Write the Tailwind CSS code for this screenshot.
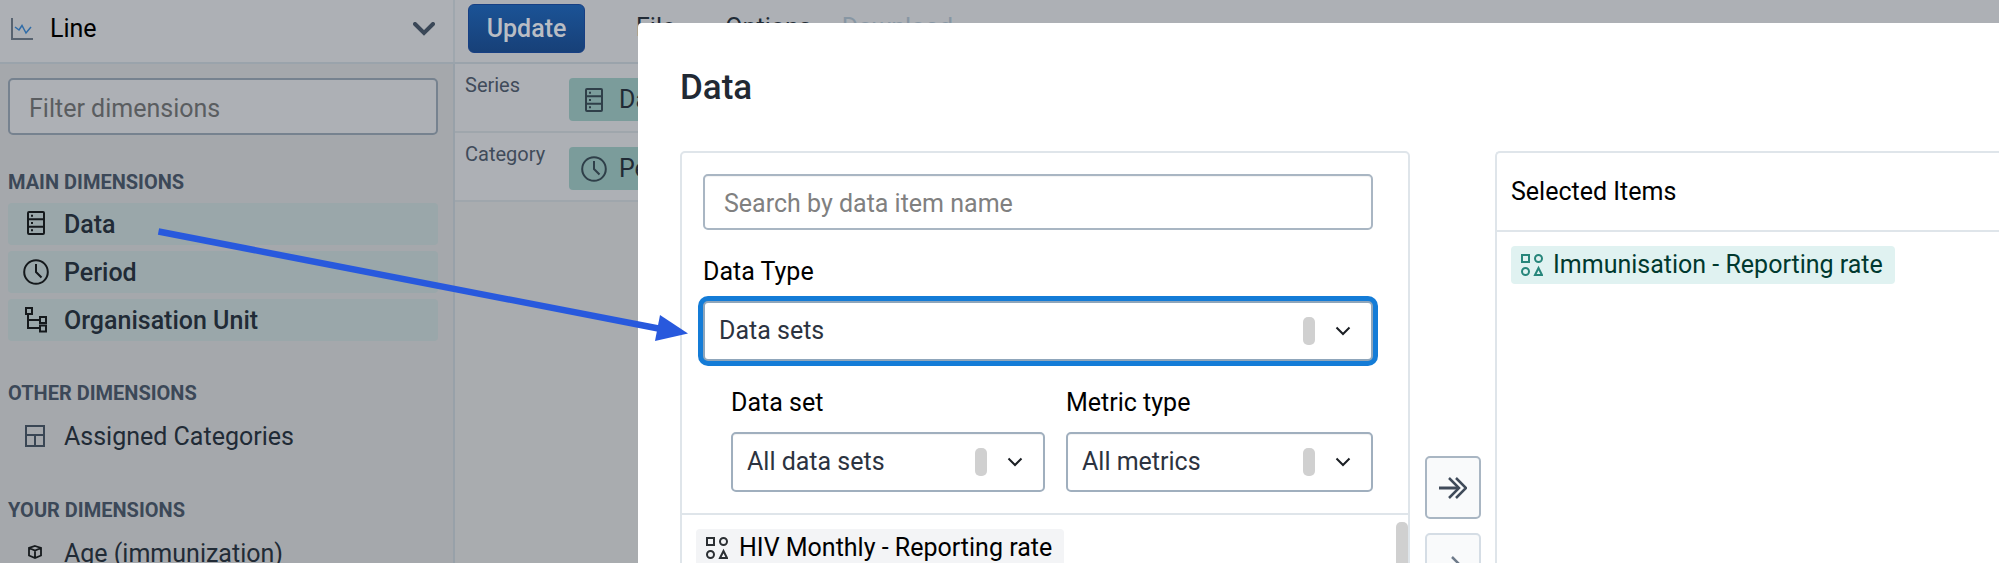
<!DOCTYPE html>
<html lang="en">
<head>
<meta charset="utf-8">
<title>Data visualizer</title>
<script src="https://cdn.jsdelivr.net/npm/@tailwindcss/browser@4"></script>
</head>
<body class="relative flex h-screen flex-col overflow-hidden bg-[#a9acaf] font-['Roboto',sans-serif] text-[25px] leading-7 text-[#212b36]">
<svg class="hidden">
  <symbol id="server" viewBox="0 0 18 24"><g fill="none" stroke="currentColor" stroke-width="2"><rect x="1" y="1" width="16" height="22" rx="1"/><path d="M1 8.300h16M1 15.700h16"/></g><path fill="currentColor" d="M4 3.800h2v2H4zM4 11h2v2H4zM4 18.300h2v2H4z"/></symbol>
  <symbol id="clock" viewBox="0 0 26 26"><g fill="none" stroke="currentColor" stroke-width="2"><circle cx="13" cy="13" r="11.800"/><path d="M13 5v8l5.500 5.500"/></g></symbol>
  <symbol id="shapes" viewBox="0 0 22 22"><g fill="none" stroke="currentColor" stroke-width="2"><path d="M1 1h7v7H1zM14 21l3.500-7 3.500 7z"/><circle cx="17.500" cy="4.500" r="3.500"/><circle cx="4.500" cy="17.500" r="3.500"/></g></symbol>
  <symbol id="chev" viewBox="0 0 16 10"><path d="M1.500 1.500 8 8l6.500-6.500" fill="none" stroke="currentColor" stroke-width="2"/></symbol>
</svg>

<header class="flex h-16 shrink-0 border-b-2 border-[#9aa3ab] bg-[#adb0b5]">
  <button class="flex w-[455px] shrink-0 items-center border-r-2 border-[#9fa7ae] pr-[18px] pb-1 pl-[11px] text-left text-black">
    <svg class="h-[22px] w-[22px]" viewBox="0 0 22 22" fill="none"><path d="M1 0v21h21" stroke="#586370" stroke-width="2"/><path d="m4 9 4 3 3-4.500 4 7.500 5-6" stroke="#2f6ca8" stroke-width="1.500"/></svg>
    <span class="ml-[17px] flex-1">Line</span>
    <svg class="h-[14px] w-[22px] text-[#3a4757]" viewBox="0 0 22 14"><path d="m2 2 9 9 9-9" fill="none" stroke="currentColor" stroke-width="4" stroke-linecap="round"/></svg>
  </button>
  <nav class="flex flex-1 items-start pt-1 pl-[13px]">
    <button class="h-[49px] w-[117px] rounded-md border border-[#173f83] bg-linear-to-b from-[#1b5396] to-[#174078] font-medium text-[#b9bdc4]">Update</button>
    <button class="mt-[10px] ml-[51px]">File</button>
    <button class="mt-[10px] ml-[50px]">Options</button>
    <button class="mt-[10px] ml-[30px] text-[#8796a3]" disabled>Download</button>
  </nav>
</header>

<div class="flex min-h-0 flex-1">
  <aside class="w-[455px] shrink-0 border-r-2 border-[#98a1a9] bg-[#a5a8ac] pt-[14px] pr-[15px] pl-2">
    <input aria-label="Filter dimensions" placeholder="Filter dimensions" class="block h-[57px] w-full rounded-[5px] border-2 border-[#76828f] bg-[#adb0b5] px-[19px] pt-[3px] placeholder:text-[#5a5d60]">
    <h2 class="mt-[35px] text-[20px] leading-6 font-bold text-[#3c4858]">MAIN DIMENSIONS</h2>
    <ul class="mt-[9px] flex flex-col gap-[6px] font-medium">
      <li class="flex h-[42px] items-center rounded bg-[#9aa7aa] pt-[2px]"><span class="flex w-14 pb-1 pl-[19px]"><svg class="h-6 w-[18px] text-[#15191c]"><use href="#server"/></svg></span>Data</li>
      <li class="flex h-[42px] items-center rounded bg-[#9aa7aa] pt-[2px]"><span class="flex w-14 pb-[2px] pl-[15px]"><svg class="h-[26px] w-[26px] text-[#15191c]"><use href="#clock"/></svg></span>Period</li>
      <li class="flex h-[42px] items-center rounded bg-[#9aa7aa] pt-[2px]"><span class="flex w-14 pb-[2px] pl-[17px]"><svg class="h-[26px] w-[22px]" viewBox="0 0 22 26" fill="none" stroke="#15191c" stroke-width="2"><path d="M1 1h6v6H1zM15 10h6v6h-6zM15 18.500h6v6h-6zM3 7v14h12M3 13h12"/></svg></span>Organisation Unit</li>
    </ul>
    <h2 class="mt-10 text-[20px] leading-6 font-bold text-[#3c4858]">OTHER DIMENSIONS</h2>
    <ul class="mt-[10px]">
      <li class="flex h-[42px] items-center pt-[2px]"><span class="flex w-14 pb-[2px] pl-[17px]"><svg class="h-[22px] w-5" viewBox="0 0 20 22" fill="none" stroke="#3a4654" stroke-width="2"><path d="M1 1h18v20H1zM1 10h18M10 10v11"/></svg></span>Assigned Categories</li>
    </ul>
    <h2 class="mt-[41px] text-[20px] leading-6 font-bold text-[#3c4858]">YOUR DIMENSIONS</h2>
    <ul class="mt-[10px]">
      <li class="flex h-[42px] items-center pt-[2px]"><span class="flex w-14 pb-1 pl-5"><svg class="h-[14px] w-[14px]" viewBox="0 0 14 14" fill="none" stroke="#15191c" stroke-width="1.800"><path d="m7 1 6 2v7.500L7 13l-6-2.500V3zM1 3l6 2.500L13 3M7 5.500V13"/></svg></span>Age (immunization)</li>
    </ul>
  </aside>
  <main class="flex-1">
    <section class="flex h-[69px] border-b-2 border-[#9fa6ac] bg-[#adb0b5] pl-[10px]">
      <h3 class="w-[104px] pt-[7px] text-[20px] text-[#404b5a]">Series</h3>
      <span class="mt-[14px] flex h-[43px] w-[130px] items-center gap-4 rounded bg-[#7b9c9b] pl-4"><svg class="h-6 w-[18px] text-[#2f3f49]"><use href="#server"/></svg>Data</span>
    </section>
    <section class="flex h-[69px] border-b-2 border-[#9fa6ac] bg-[#adb0b5] pl-[10px]">
      <h3 class="w-[104px] pt-[7px] text-[20px] text-[#404b5a]">Category</h3>
      <span class="mt-[14px] flex h-[43px] w-[130px] items-center gap-3 rounded bg-[#7b9c9b] pl-3"><svg class="h-[26px] w-[26px] text-[#2f3f49]"><use href="#clock"/></svg>Period</span>
    </section>
  </main>
</div>

<div role="dialog" aria-labelledby="title" class="absolute top-[23px] right-0 bottom-0 left-[638px] overflow-hidden rounded-tl bg-white pt-[45px] pl-[42px] text-black">
  <h1 id="title" class="text-[35px] leading-10 font-medium text-[#212934]">Data</h1>
  <div class="mt-[43px] flex h-[600px]">
    <section class="w-[730px] shrink-0 rounded-[5px] border-2 border-[#dfe5ea]">
      <div class="border-b-2 border-[#dfe5ea] px-[21px] py-[21px]">
        <div class="pr-[14px]">
          <input aria-label="Search" placeholder="Search by data item name" class="block h-14 w-full rounded-[5px] border-2 border-[#a9b6c3] px-[19px] pt-[2px] inset-shadow-xs placeholder:text-[#808080]">
          <label for="type" class="mt-7 block">Data Type</label>
          <div class="relative mt-[15px]">
            <select id="type" class="block h-[60px] w-full appearance-none rounded-[5px] border-2 border-[#8fa6bb] bg-white px-[14px] text-[#2c3340] ring-[5px] ring-[#147cd7]"><option>Data sets</option></select>
            <span class="pointer-events-none absolute inset-y-0 right-[22px] flex items-center gap-5"><i class="h-7 w-3 rounded-[5px] bg-[#d0d0d0]"></i><svg class="h-[10px] w-4 text-[#1b1f24]"><use href="#chev"/></svg></span>
          </div>
        </div>
        <div class="mt-7 flex gap-[21px] pr-[14px] pl-7">
          <div class="w-[314px]">
            <label for="set" class="block">Data set</label>
            <div class="relative mt-[15px]">
              <select id="set" class="block h-[60px] w-full appearance-none rounded-[5px] border-2 border-[#a0afbe] bg-white px-[14px] text-[#2c3340] inset-shadow-xs"><option>All data sets</option></select>
              <span class="pointer-events-none absolute inset-y-0 right-[22px] flex items-center gap-5"><i class="h-7 w-3 rounded-[5px] bg-[#d0d0d0]"></i><svg class="h-[10px] w-4 text-[#1b1f24]"><use href="#chev"/></svg></span>
            </div>
          </div>
          <div class="flex-1">
            <label for="metric" class="block">Metric type</label>
            <div class="relative mt-[15px]">
              <select id="metric" class="block h-[60px] w-full appearance-none rounded-[5px] border-2 border-[#a0afbe] bg-white px-[14px] text-[#2c3340] inset-shadow-xs"><option>All metrics</option></select>
              <span class="pointer-events-none absolute inset-y-0 right-[22px] flex items-center gap-5"><i class="h-7 w-3 rounded-[5px] bg-[#d0d0d0]"></i><svg class="h-[10px] w-4 text-[#1b1f24]"><use href="#chev"/></svg></span>
            </div>
          </div>
        </div>
      </div>
      <div class="flex justify-between pl-[14px]">
        <div class="mt-[14px] flex h-[38px] items-center gap-[11px] rounded bg-[#f3f4f6] pr-3 pl-[10px]"><svg class="h-[22px] w-[22px] text-[#2b2f33]"><use href="#shapes"/></svg>HIV Monthly - Reporting rate</div>
        <i class="mt-[7px] h-20 w-3 rounded-t-[5px] bg-[#d0d0d0]"></i>
      </div>
    </section>
    <div class="flex w-[85px] shrink-0 flex-col items-center gap-[14px] pt-[305px]">
      <button aria-label="Add all" class="flex h-[63px] w-14 items-center justify-center rounded-[5px] border-2 border-[#a9b6c3] bg-[#f9fafb]"><svg class="h-[22px] w-7" viewBox="0 0 28 22" fill="none" stroke="#404b5a"><path d="M0 11h19" stroke-width="3"/><path d="m10 1 10 10-10 10M17 1l10 10-10 10" stroke-width="2.500"/></svg></button>
      <button aria-label="Add selected" class="flex h-[63px] w-14 items-center justify-center rounded-[5px] border-2 border-[#d5dde5] bg-[#f9fafb]"><svg class="h-[18px] w-[18px]" viewBox="0 0 18 18" fill="none" stroke="#6e7a8a" stroke-width="2.500"><path d="M0 9h16M8 1l8 8-8 8"/></svg></button>
    </div>
    <section class="flex-1 rounded-l-[5px] border-2 border-r-0 border-[#dfe5ea]">
      <h2 class="flex h-[79px] items-center border-b-2 border-[#dfe5ea] pl-[14px]">Selected Items</h2>
      <div class="mt-[14px] ml-[14px] flex h-[38px] w-fit items-center gap-[10px] rounded bg-[#e0f2f1] pr-3 pl-[10px] text-[#00392f]"><svg class="h-[22px] w-[22px] text-[#27867b]"><use href="#shapes"/></svg>Immunisation - Reporting rate</div>
    </section>
  </div>
</div>

<!-- Callout arrow laid over the page -->
<svg class="pointer-events-none absolute top-[220px] left-[150px] h-[130px] w-[545px]" viewBox="150 220 545 130"><path d="m158.500 231.500 500 97" stroke="#2859dd" stroke-width="6.500"/><path d="m688 333.500-28-18.500-5 26z" fill="#2859dd"/></svg>
</body>
</html>
